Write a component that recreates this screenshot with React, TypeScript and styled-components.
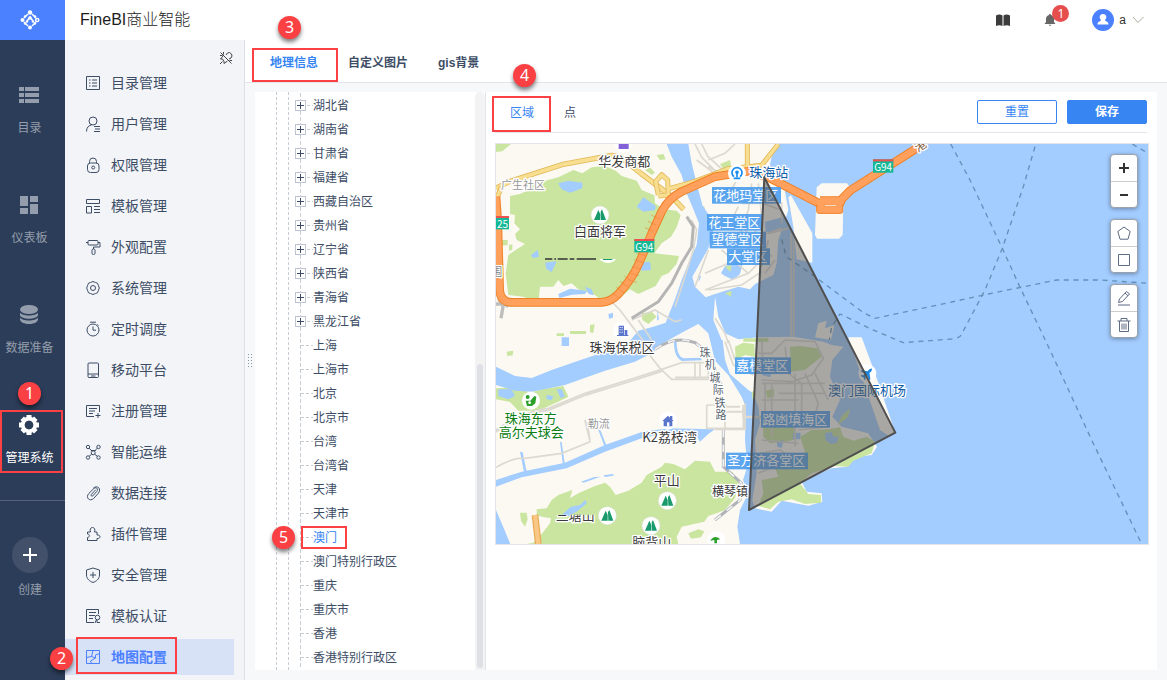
import React, { useState } from "react";
import styled, { createGlobalStyle, css } from "styled-components";

const GlobalStyle = createGlobalStyle`
  *, *::before, *::after { box-sizing: border-box; }
  body {
    margin: 0;
    background: #f7f8fa;
    color: #3d4d66;
    font-family: "Liberation Sans", "Noto Sans CJK SC", sans-serif;
    font-size: 12px;
  }
  button { font: inherit; color: inherit; background: none; border: 0; padding: 0; cursor: pointer; }
  a { color: inherit; text-decoration: none; }
  ul { list-style: none; margin: 0; padding: 0; }
  svg { display: block; }
`;

/* ---------- annotation marks ---------- */

const Frame = styled.span<{ $top: number; $right: number; $bottom: number; $left: number }>`
  position: absolute;
  top: ${(p) => p.$top}px;
  right: ${(p) => p.$right}px;
  bottom: ${(p) => p.$bottom}px;
  left: ${(p) => p.$left}px;
  border: 2px solid #fb4144;
  pointer-events: none;
  z-index: 2;
`;

const Step = styled.span<{ $top: number; $left: number }>`
  position: absolute;
  top: ${(p) => p.$top}px;
  left: ${(p) => p.$left}px;
  width: 23px;
  height: 23px;
  border-radius: 50%;
  background: #fb4044;
  color: #fff;
  font: 16px/23px "Noto Sans", sans-serif;
  text-align: center;
  box-shadow: 0 3px 4px rgba(0, 0, 0, 0.5);
  z-index: 3;
`;

/* ---------- shell ---------- */

const Shell = styled.div`
  display: flex;
  min-height: 100vh;
`;

const Nav = styled.nav`
  flex: none;
  width: 65px;
  background: #2c3d59;
`;

const Logo = styled.a`
  display: flex;
  align-items: center;
  height: 40px;
  padding-left: 20px;
  background: #4b80ff;
`;

const NavList = styled.ul`
  display: flex;
  flex-direction: column;
  gap: 47px;
  padding: 40px 2px 27px 0;
`;

const NavItem = styled.li`
  position: relative;
`;

const NavLink = styled.a<{ $active?: boolean }>`
  display: flex;
  flex-direction: column;
  align-items: center;
  height: 63px;
  padding: 4px 4px 0 0;
  gap: 11px;
  line-height: 22px;
  white-space: nowrap;
  color: ${(p) => (p.$active ? "#fff" : "#949dab")};
`;

const CreateArea = styled.div`
  display: flex;
  flex-direction: column;
  align-items: center;
  gap: 6px;
  padding: 36px 5px 0 0;
  border-top: 1px solid #56647b;
  line-height: 22px;
  color: #949dab;
`;

const CreateButton = styled.button`
  display: grid;
  place-items: center;
  width: 36px;
  height: 36px;
  border-radius: 50%;
  background: #42506a;
  color: #fff;
`;

const Body = styled.div`
  flex: 1;
  min-width: 0;
  display: flex;
  flex-direction: column;
`;

const Header = styled.header`
  display: flex;
  align-items: center;
  justify-content: space-between;
  height: 40px;
  padding: 0 22px 0 15px;
  background: #fff;
`;

const Title = styled.h1`
  margin: 0;
  font-size: 16px;
  font-weight: 300;
  line-height: 24px;
  color: #1c1c1c;
`;

const HeaderTools = styled.div`
  display: flex;
  align-items: center;
  color: #333;
`;

const BellButton = styled.button`
  position: relative;
  margin: 0 36px 0 34px;
`;

const Count = styled.span`
  position: absolute;
  top: -9px;
  left: 8px;
  width: 17px;
  height: 17px;
  border-radius: 50%;
  background: #e64e4e;
  color: #fff;
  font: 12px/17px "Noto Sans", sans-serif;
  text-align: center;
`;

const UserButton = styled.button`
  display: flex;
  align-items: center;
  gap: 5px;
`;

const Workspace = styled.div`
  flex: 1;
  display: flex;
`;

/* ---------- side menu ---------- */

const Side = styled.aside`
  position: relative;
  flex: none;
  width: 180px;
  padding-top: 25px;
  background: #f2f4f8;
  border-right: 1px solid #dcdfe5;
`;

const PinButton = styled.button`
  position: absolute;
  top: 11px;
  right: 11px;
`;

const MenuList = styled.ul`
  display: flex;
  flex-direction: column;
  gap: 5px;
  padding: 0 10px 5px 0;
`;

const MenuItem = styled.li`
  position: relative;
`;

const MenuLink = styled.a<{ $active?: boolean }>`
  display: flex;
  align-items: center;
  gap: 10px;
  height: 36px;
  padding-left: 20px;
  font-size: 14px;
  ${(p) =>
    p.$active &&
    css`
      background: #d8e2f7;
      color: #4b80ff;
      font-weight: 700;
    `}
`;

const MenuLabel = styled.span`
  padding-bottom: 2px;
`;

/* ---------- main ---------- */

const Main = styled.main`
  flex: 1;
  min-width: 0;
  display: flex;
  flex-direction: column;
`;

const TabBar = styled.div`
  display: flex;
  gap: 30px;
  height: 43px;
  padding-left: 25px;
  background: #fff;
  border-bottom: 1px solid #e3e5ea;
`;

const Tab = styled.button<{ $active?: boolean }>`
  position: relative;
  height: 43px;
  padding-bottom: 1px;
  font-weight: 700;
  color: ${(p) => (p.$active ? "#3685f2" : "#3d4d66")};
`;

const Content = styled.div`
  flex: 1;
  display: flex;
  padding: 9px 10px 10px 0;
`;

const Splitter = styled.div`
  display: grid;
  place-items: center;
  width: 10px;
  padding-bottom: 42px;
`;

const TreePane = styled.section`
  position: relative;
  flex: none;
  display: flex;
  justify-content: space-between;
  width: 231px;
  background: #fff;
  border-right: 1px solid #e3e5ea;
`;

const dashDown = css`
  background: repeating-linear-gradient(#c8ccd3 0 4px, transparent 4px 6px);
`;

const TreeList = styled.ul`
  display: flex;
  flex-direction: column;
  padding: 1px 0;
  margin-left: 21px;
  border-left: 1px dashed #c8ccd3;
`;

const TreeLevel = styled.li`
  padding-left: 11px;
  & > ul {
    margin: -1px 0;
    padding: 1px 0;
    border-left: 1px dashed #c8ccd3;
  }
`;

const TreeRow = styled.li`
  position: relative;
  display: flex;
  align-items: center;
  width: fit-content;
  height: 24px;
  padding-left: 6px;
  &::before {
    content: "";
    position: absolute;
    left: 11px;
    top: 0;
    bottom: 0;
    width: 1px;
    ${dashDown}
  }
`;

const Expander = styled.button`
  position: relative;
  display: grid;
  place-items: center;
  width: 11px;
  height: 11px;
  border: 1px solid #bfc5d0;
  background: #fff;
  color: #3d4d66;
`;

const Twig = styled.span<{ $leaf?: boolean }>`
  width: ${(p) => (p.$leaf ? 12 : 6)}px;
  margin-left: ${(p) => (p.$leaf ? 6 : 1)}px;
  height: 1px;
  background: repeating-linear-gradient(90deg, #c8ccd3 0 3px, transparent 3px 5px);
`;

const TreeLabel = styled.button<{ $active?: boolean }>`
  padding-top: 2px;
  line-height: 22px;
  color: ${(p) => (p.$active ? "#3685f2" : "#3d4d66")};
`;

const Track = styled.div`
  display: flex;
  flex-direction: column;
  justify-content: flex-end;
  width: 10px;
  padding: 2px;
  border-radius: 5px 5px 0 0;
  background: #f3f3f3;
`;

const Thumb = styled.div`
  height: 53%;
  border-radius: 3px;
  background: #dfe0e5;
`;

const Detail = styled.section`
  flex: 1;
  min-width: 0;
  padding: 0 8px 0 9px;
  background: #fff;
`;

const DetailBar = styled.div`
  display: flex;
  align-items: center;
  justify-content: space-between;
  height: 41px;
  margin: 0 2px 10px 0;
  padding-left: 15px;
  border-bottom: 1px solid #e3e5ea;
`;

const SubTabs = styled.div`
  display: flex;
  gap: 30px;
`;

const SubTab = styled.button<{ $active?: boolean }>`
  position: relative;
  height: 40px;
  padding-bottom: 2px;
  color: ${(p) => (p.$active ? "#3685f2" : "#3d4d66")};
`;

const Actions = styled.div`
  display: flex;
  gap: 10px;
`;

const ActionButton = styled.button<{ $primary?: boolean }>`
  width: 80px;
  height: 24px;
  border: 1px solid #3685f2;
  border-radius: 2px;
  line-height: 22px;
  color: #3685f2;
  ${(p) =>
    p.$primary &&
    css`
      background: #3685f2;
      color: #fff;
      font-weight: 700;
    `}
`;

const MapBox = styled.div`
  position: relative;
  height: 402px;
  border: 1px solid #e3e5ea;
  background: #a3ccff;
  overflow: hidden;
  & > svg { width: 100%; height: 400px; }
`;

const MapTools = styled.div`
  position: absolute;
  top: 10px;
  right: 10px;
  display: flex;
  flex-direction: column;
  gap: 11px;
`;

const ToolGroup = styled.div`
  width: 28px;
  border: 1px solid #9aa3ad;
  border-radius: 4px;
  background: #fff;
  box-shadow: 0 1px 4px rgba(0, 0, 0, 0.35);
`;

const ToolButton = styled.button`
  display: grid;
  place-items: center;
  width: 26px;
  height: 26px;
  color: #5d6b83;
  & + & { border-top: 1px solid #ccc; }
`;

/* ---------- icons ---------- */

const Icon = ({ size = 16, children, width = 1 }: { size?: number; width?: number; children: React.ReactNode }) => (
  <svg width={size} height={size} viewBox="0 0 16 16" fill="none" stroke="currentColor" strokeWidth={width} aria-hidden="true">
    {children}
  </svg>
);

const navItems = [
  {
    label: "目录",
    icon: (
      <g>
        <path d="M0 3h5v4H0zM6 3h14v4H6zM0 9h5v4H0zM6 9h14v4H6zM0 15h5v4H0zM6 15h14v4H6z" />
      </g>
    ),
  },
  { label: "仪表板", icon: <path d="M1 2h8v10H1zM11 2h8v6h-8zM1 14h8v6H1zM11 10h8v10h-8z" /> },
  {
    label: "数据准备",
    icon: (
      <g>
        <ellipse cx="10" cy="5.500" rx="9" ry="4.500" />
        <path d="M1 8.500c2 4 16 4 18 0v2.500c-1 5-17 5-18 0zM1 13.500c2 4 16 4 18 0v2c-1 6-17 6-18 0z" />
      </g>
    ),
  },
  {
    label: "管理系统",
    icon: (
      <g>
        <circle cx="10" cy="11" r="6.200" fill="none" stroke="currentColor" strokeWidth="4" />
        <g stroke="currentColor" strokeWidth="5">
          <path d="M10 1v4M10 17v4M0 11h4M16 11h4M3.200 4.200l3 3M13.800 14.800l3 3M3.200 17.800l3-3M13.800 7.200l3-3" />
        </g>
        <circle cx="10" cy="11" r="4.300" fill="#2c3d59" />
      </g>
    ),
  },
];

const menuItems: { label: string; icon: React.ReactNode }[] = [
  {
    label: "目录管理",
    icon: <path d="M1.500 1.500h13v13h-13zM4 5h1.500M4 8h1.500M4 11h1.500M7 5h5M7 8h5M7 11h5" />,
  },
  {
    label: "用户管理",
    icon: (
      <>
        <circle cx="8" cy="5" r="4" />
        <path d="M1.500 15.500c0-4 2-6 5-6.500M9 10.500h6M10 13h5M9 15.500h6" />
      </>
    ),
  },
  {
    label: "权限管理",
    icon: (
      <>
        <path d="M4.500 6V4.500a3.500 3.500 0 0 1 7 0V6" />
        <rect x="2.500" y="6" width="11.500" height="9.500" rx="3" />
        <circle cx="8.200" cy="10.500" r="1.500" />
      </>
    ),
  },
  {
    label: "模板管理",
    icon: <path d="M1.500 1.500h13v4h-13zM1.500 8.500h5v6.500h-5zM9 8.500h6M9 11.500h6M9 14.500h6" />,
  },
  {
    label: "外观配置",
    icon: (
      <>
        <rect x="3" y="1.500" width="10" height="4.500" rx="1" />
        <path d="M3 3.500H1M13 3.500h2v4.500H8.500v2" />
        <rect x="7" y="10" width="3" height="5.500" rx="1.200" />
      </>
    ),
  },
  {
    label: "系统管理",
    icon: (
      <>
        <path d="M5.500 2.500Q8 .5 10.500 2.500q2.500 0 2.800 2.700 2 2.800 0 5.600-.3 2.700-2.800 2.700-2.500 2-5 0-2.500 0-2.800-2.700-2-2.800 0-5.600.3-2.700 2.800-2.700z" strokeLinejoin="round" />
        <circle cx="8" cy="8" r="2.500" />
      </>
    ),
  },
  {
    label: "定时调度",
    icon: (
      <>
        <circle cx="8" cy="9" r="6" />
        <path d="M5 1.200h6M8 5.500V9.200h3M12.300 3.500l1.200 1" />
      </>
    ),
  },
  {
    label: "移动平台",
    icon: (
      <>
        <rect x="3" y="1" width="10.500" height="14.500" rx="1" />
        <path d="M3 12h10.500M6 14h4.500" />
      </>
    ),
  },
  {
    label: "注册管理",
    icon: <path d="M14.500 9V2.500h-13v11H9M4 5.500h8M4 8h6M4 10.500h4M10.500 12.500h5M13 10v5" />,
  },
  {
    label: "智能运维",
    icon: (
      <>
        <circle cx="3" cy="3" r="1.700" />
        <circle cx="13.500" cy="3" r="1.700" />
        <circle cx="3" cy="13.500" r="1.700" />
        <circle cx="13.500" cy="13.500" r="1.700" />
        <circle cx="8.200" cy="8.800" r="2" />
        <path d="M4.200 4.200 7 7.200M12.200 4.200 9.500 7.200M4.200 12.200l2.500-2M12.200 12.200l-2.500-2M6 6.500h4.500" />
      </>
    ),
  },
  {
    label: "数据连接",
    icon: (
      <path d="M10.500 5 6.300 9.500c-.8 1 .5 2.300 1.500 1.400l4-4.500c2.200-2.600-1-4.800-3-2.800L3.800 8.500c-3.800 4.300 1.200 8.500 4.800 5l4.500-5C17 4 12.500-.5 8.500 3" strokeLinecap="round" />
    ),
  },
  {
    label: "插件管理",
    icon: (
      <path d="M2.500 14.500v-3c2.500 0 2.500-3.500 0-3.500V6h3c-1-2.500 0-4.500 2-4.500s3 2 2 4.500h2.500v3c4-.5 4 4 0 3.500v2z" strokeLinejoin="round" />
    ),
  },
  {
    label: "安全管理",
    icon: <path d="M8 1 14.500 3v5c0 4-3.500 6.500-6.500 7.500C5 14.500 1.500 12 1.500 8V3zM8 5v6M5 8h6" strokeLinejoin="round" />,
  },
  {
    label: "模板认证",
    icon: (
      <>
        <path d="M13.500 6V1.500h-12v13H9M4 4.500h7M4 7.500h6M4 10.500h4" />
        <circle cx="12.500" cy="9.500" r="2.300" />
        <path d="M11.500 11.500 10 15M12 12v2.500h3" />
      </>
    ),
  },
  {
    label: "地图配置",
    icon: <path d="M1.500 1.500h13v13h-13zM1.500 8.500l5-1 4 1.500V6l4-1.500M6.500 7.500l1.500-6M10.500 9l-5 3 1 2.500" />,
  },
];

/* ---------- map ---------- */

const Halo = styled.text`
  font-family: "Noto Sans CJK SC", sans-serif;
  text-anchor: middle;
  dominant-baseline: central;
  paint-order: stroke;
  stroke: #fff;
  stroke-width: 8px;
  stroke-linejoin: round;
`;

const Plain = styled(Halo)`
  stroke: none;
`;

const places: { x: number; y: number; text: string; color?: string; size?: number }[] = [
  { x: 388, y: 60, text: "华发商都" },
  { x: 84, y: 131, text: "广生社区", color: "#999", size: 33 },
  { x: 315, y: 271, text: "白面将军" },
  { x: 5, y: 392, text: "围", color: "#888", size: 33 },
  { x: 381, y: 620, text: "珠海保税区" },
  { x: 311, y: 849, text: "勒流", color: "#999", size: 33 },
  { x: 524, y: 890, text: "K2荔枝湾" },
  { x: 107, y: 831, text: "珠海东方", color: "#0b7d12" },
  { x: 109, y: 875, text: "高尔夫球会", color: "#0b7d12" },
  { x: 515, y: 1018, text: "平山" },
  { x: 470, y: 1203, text: "脑背山" },
  { x: 705, y: 1050, text: "横琴镇", size: 36 },
  { x: 630, y: 636, text: "珠", color: "#5d6670", size: 33 },
  { x: 646, y: 673, text: "机", color: "#5d6670", size: 33 },
  { x: 660, y: 710, text: "城", color: "#5d6670", size: 33 },
  { x: 670, y: 748, text: "际", color: "#5d6670", size: 33 },
  { x: 675, y: 785, text: "铁", color: "#5d6670", size: 33 },
  { x: 678, y: 823, text: "路", color: "#5d6670", size: 33 },
];

const districts: [number, number, number, string][] = [
  [651, 141, 207, "花地玛堂区"],
  [636, 222, 167, "花王堂区"],
  [644, 275, 169, "望德堂区"],
  [696, 325, 129, "大堂区"],
  [720, 652, 168, "嘉模堂区"],
  [798, 813, 207, "路凼填海区"],
  [693, 938, 246, "圣方济各堂区"],
];

const Peak = ({ x, y }: { x: number; y: number }) => (
  <g transform={`translate(${x} ${y})`}>
    <circle r="27" fill="#fff" stroke="#ddd" strokeWidth="1.500" />
    <path d="M-18 15 -5-15 1 -2 1 15zM3 15 2-10 6-17 18 15z" fill="#189a6c" />
  </g>
);

const Shield = ({ x, y, w, text }: { x: number; y: number; w: number; text: string }) => (
  <g>
    <rect x={x} y={y} width={w} height="40" fill="#14b896" />
    <rect x={x} y={y} width={w} height="6" fill="#f05050" />
    <Plain x={x + w / 2} y={y + 22} fontSize="30" fill="#fff">
      {text}
    </Plain>
  </g>
);

const Cased = ({ d, outer, inner, width, edge = 5 }: { d: string; outer: string; inner: string; width: number; edge?: number }) => (
  <g fill="none" strokeLinejoin="round">
    <path d={d} stroke={outer} strokeWidth={width} />
    <path d={d} stroke={inner} strokeWidth={width - edge} />
  </g>
);

/* Map units are thirds of a screen pixel. */
const MacauMap = () => (
  <svg viewBox="3 12 1956 1200" preserveAspectRatio="xMinYMin slice" role="img" aria-label="澳门地图">
    <rect x="3" y="12" width="1956" height="1200" fill="#fcf9f2" />

    {/* parks on the mainland */}
    <g fill="#c9e5a0">
      <path d="M3 12H48L22 34 3 36zM45 168 75 162 100 150 120 125 150 122 190 112 235 90 262 100 290 82 330 78 362 92 380 108 425 122 440 150 478 166 480 190 505 208 545 212 557 226 545 262 528 290 500 310 478 340 552 348 545 372 520 400 500 408 482 438 430 462 405 448 375 474 330 492 300 465 250 448 230 430 205 438 190 420 175 440 135 440 130 490 85 470 40 465 32 400 40 345 62 330 90 312 65 300 60 282 75 268 58 250 60 225 45 222z" />
      <path d="M450 90 465 82 480 98 470 105zM485 45 505 42 512 58 495 60zM615 205 628 198 630 222 615 232zM440 520 470 515 485 530 460 552 442 540zM225 573h48v9h-48zM285 555l14-2-4 26-10-2zM42 315l10-2v16l-10 3zM185 580h22v8h-22zM20 300h18v16H20zM675 72l30-12 4 20-24 8z" />
      <path d="M3 745 85 742 100 760 140 748 205 738 220 770 190 785 130 812 70 812 45 786 3 778zM35 635l20-3-2 14-16 2z" />
      <path d="M125 1108 155 1105 170 1080 190 1065 232 1050 225 1075 250 1060 300 1038 330 1028 345 1040 362 1065 400 1052 440 1028 455 1005 500 980 510 968 535 972 570 988 600 962 645 965 660 995 712 995 732 1030 720 1075 690 1110 665 1120 640 1128 628 1145 560 1160 545 1190 550 1212H95L115 1208 142 1180 165 1150 168 1135 140 1130 125 1125z" />
      <path d="M75 1118h20l3 20-8 22-12-18zM580 1180l30-12 18 6-10 18-30 4z" />
    </g>

    {/* water */}
    <g fill="#a3ccff">
      <path d="M515 12 530 50 560 105 575 160 592 200 612 250 605 315 580 370 560 420 540 478 512 548 470 562 430 572 405 602 330 635 250 662 170 690 110 714 60 708 3 680V735L60 752 110 755 210 735 330 692 420 665 470 640 500 612 560 578 610 552 640 580 660 662 700 705 740 770 752 800 750 900 757 980 744 1020 760 1060 735 1110 727 1160 735 1212H1962V12H845L830 50 818 105 868 145 880 210 850 300 845 370 835 405 780 432 765 448 730 440 660 462 632 472 600 440 592 410 612 375 640 325 655 270 645 230 622 195 605 130 590 70 580 12z" />
      <path d="M190 130 220 122 262 128 262 145 225 158 200 148zM425 200 445 172 482 198 480 210 445 215zM435 368 465 365 468 390 440 392zM150 368l35-4-15 32-15-8zM108 345l20-15 4 20-18 4zM190 462l35-16 50 6-4 10-40 2-38 10zM340 522l14-4v15l-12 3zM270 440l20 8 6 18-15-4zM488 512l-2 30 6-4zM610 405l8 4-6 16zM200 592h22v26h-22zM625 250l5 45-10 14z" />
      <path d="M3 1110 20 1150 46 1212H3zM3 1020 80 995 210 968 330 915 440 876 520 865 660 868 640 882 615 905 600 880 500 882 440 895 330 935 215 985 80 1012 3 1040zM75 935l8 2 12 58-8 1zM195 905l5 1 10 70-6 1zM310 870l5-2 22 55-6 3zM258 1025l40-14 18-1-50 18zM325 1006l30-4v5l-25 4zM200 1125 228 1100 255 1095 272 1080 275 1090 245 1115 220 1128z" />
      <path d="M545 605q0 45 22 50l50-2 4 8-60 2q-24-10-24-56zM10 748l40 0 10 20-20 10-30-10zM185 748h16l8 22-12 4zM155 765l20 4-6 12-14-4z" />
      <path d="M690 378 745 362 735 402 715 420 690 408 678 400zM810 245 868 230 880 265 830 280 812 275zM685 145 720 140 715 168 690 160z" />
    </g>

    {/* islands */}
    <g fill="#fcf9f2">
      <path d="M680 575 730 598 790 592 895 590 985 605 1010 615 1045 620 1012 660 1005 710 1035 780 1012 830 1040 860 1120 880 1146 920 1130 945 1080 952 1055 980 1010 985 950 1010 920 1025 935 1055 980 1060 982 1085 940 1097 860 1082 830 1115 780 1105 772 1080 785 1000 780 900 795 850 790 800 775 760 760 750 705 702 690 660z" />
      <path d="M1060 592H1100L1140 700 1201 878 1182 888 1155 870 1090 680z" />
      <path d="M965 142 980 130H1056L1070 148 1045 190 1043 285 1032 296H966L960 285zM880 172 888 166 952 280V368L905 358 895 260zM660 470 670 530 700 600 680 600 655 540z" />
      <path d="M960 592 970 550 995 542 990 565 1018 556 1008 600z" />
    </g>
    <g fill="#c9e5a0">
      <path d="M720 620 745 608 778 612 780 650 750 645 722 660zM745 595h75v10h-75zM885 620 915 618 968 625 980 650 930 690 888 695zM770 755l10-3v24l-8 2zM690 460l20-8-2 18zM1040 828l26-24-8 28-30 24zM812 752l25-6v24l-20 4zM742 675l25-5-5 25-20-4zM805 862 900 858 895 900 870 905 825 910 805 890z" />
      <path d="M915 890 950 870 1000 868 1035 862 1045 890 1075 902 1115 890 1140 905 1130 940 1075 962 1060 980 1020 978 950 1000 915 1030 940 1062 978 1065 978 1088 930 1092 890 1078 850 1085 825 1108 790 1098 805 1060 800 1020 850 1010 840 985 900 960 930 935zM690 380l20-4-4 20z" />
    </g>
    <g fill="#a3ccff">
      <path d="M990 880l20-4 6 16 14-4-4 20-18 4-16-12zM895 878h22l-2 20h-22zM845 905l20-6-4 24-14-2zM1065 670l-48 40 10 60 30-10zM800 690l30 4-4 18-24-6z" />
    </g>

    {/* minor roads */}
    <g fill="none" stroke="#dcd9d1" strokeWidth="5">
      <path d="M3 982Q60 950 90 955L200 940 285 905 270 840M285 905l-8-60M3 870Q80 815 160 805L270 760 400 720 500 688 560 668 640 668M3 876Q80 821 160 811L270 766 400 726 500 694M460 640 495 685 530 718 640 718M540 712h100M600 668v50M615 665v50M640 670v50M635 795h60M635 795v70h110v-70M690 790v80" />
      <path d="M345 480 375 510 450 610M410 540 480 510 540 545 560 540M430 540l40 60M590 240l15 30-10 60-35 110-20 60M600 12l20 40 40 40M620 12l20 40M605 60l60 45M640 50l45 42M640 80l30 16" />
      <path d="M720 12 690 40 640 60M740 100 720 130 690 180M730 200l-30 60M740 190h60l60 20M770 130l-10 80-60 160-70 30M790 130l10 100-50 120M700 240l120 100-60 60-130 50M640 450l100-15 60-40M600 440l40-110M740 260l90 90M820 280l60-15M760 300l100-35M810 130l50 60v60M680 330l80 70M820 300l-20 80M840 360l-30 40" />
      <path d="M690 605l25 70 60 30M700 600l20 60M790 640h40l40-40 90 5 25 50-35 50-60 20-90-5M800 730h190M810 730v120M830 730v160M900 700v150M920 730v110M850 760h140M800 780h110M960 700l40 80M930 700l40 90-20 70M790 830h120M800 860h100v60M800 900l110 10M795 940l60-10 40 30M820 970l60-20M790 1000l70-30M870 620l10 80 40 30M800 600l5 100M1000 860l-90 10" />
      <path d="M888 280v310M896 280v310M660 535 690 580 700 610" />
    </g>
    <path d="M745 795v35h60M745 832h55M660 868h90V790M675 800h60M680 815h70" fill="none" stroke="#dcd9d1" strokeWidth="6" />

    {/* railways */}
    <g fill="none">
      <path d="M575 230 595 260 590 320 560 370 530 430 490 485 410 535" stroke="#b5b5b5" strokeWidth="9" />
      <path d="M480 628Q540 585 600 608L640 640 680 740M685 870V980L740 1030 735 1080 660 1140" stroke="#b0b4b8" strokeWidth="9" />
      <path d="M480 628Q540 585 600 608L640 640 680 740M685 870V980L740 1030 735 1080 660 1140" stroke="#f2f2f2" strokeWidth="5" strokeDasharray="22 22" />
    </g>
    <path d="M10 470 24 500 18 535M3 492h75M10 478l30 22" fill="none" stroke="#bdbdbd" strokeWidth="10" />

    {/* main roads */}
    <Cased d="M3 145 40 126 200 74 350 46 378 52 440 102 528 168 566 208" outer="#e2b858" inner="#f7de90" width={16} />
    <Cased d="M3 180 20 140M490 165 482 125 500 104 518 120 520 165 490 168M515 148 600 124 700 86 800 76 850 12M757 12V80" outer="#e2b858" inner="#f7de90" width={15} />
    <path d="M120 1125 130 1212" stroke="#e8a854" strokeWidth="20" />
    <path d="M120 1125 130 1212" stroke="#fac884" strokeWidth="13" />
    <Cased
      d="M3 170 8 240 14 450Q16 487 50 487H320Q350 484 370 462 410 420 432 370L470 280 500 215Q520 175 560 155L660 110 760 94 820 112 980 194M1030 200 1040 178 1065 152 1150 98 1285 12M975 182H1035"
      outer="#f08024"
      inner="#ffa05c"
      width={26}
      edge={6}
    />
    <path d="M967 188h76v26q0 6-6 6h-66q-6 0-6-6z" fill="#ffa05c" />
    <path d="M965 194v20q0 6 6 6h66q6 0 6-6v-20" fill="none" stroke="#f08024" strokeWidth="3" />
    <path d="M988 194h38v5h-38z" fill="#fcf9f2" stroke="#f08024" strokeWidth="2" />
    <path d="M362 468 400 415M412 425 450 300M462 270l24-50" stroke="#e58638" strokeWidth="28" strokeDasharray="3 18" opacity="0.500" fill="none" />

    {/* ferry routes */}
    <g fill="none" stroke="#6391b8" strokeWidth="4" strokeDasharray="15 14">
      <path d="M1367 12 1425 120 1522 325 1575 442 1665 630 1790 900 1940 1212M1620 20 1585 140 1522 325 1470 450 1400 582Q1396 594 1370 597L1225 608 1130 568 1035 522 1010 560 1003 600" />
      <path d="M860 298 874 350 960 410 1105 518 1140 535 1305 500 1480 462 1685 420H1815L1959 430M1912 12 1959 40" />
    </g>

    {/* point markers */}
    <circle cx="385" cy="12" r="26" fill="#fff" />
    <path d="M371 12h30v15h-30z" fill="#8260d8" />
    <Peak x={315} y={225} />
    <Peak x={337} y={1127} />
    <Peak x={517} y={1082} />
    <Peak x={468} y={1157} />
    <path d="M150 357h22M178 357h5M188 357h30M224 357h14M245 357h58" stroke="#333" strokeWidth="4" />
    <path d="M312 357h52q-24 24-52 0" fill="#fff" />
    <path d="M324 357h28v3h-28z" fill="#189a6c" />
    <g fill="#5b74cc">
      <circle cx="381" cy="572" r="27" fill="#fff" />
      <path d="M371 557h16v28h-16zM389 570h8v15h-8zM366 585h34v3h-34z" />
      <path d="M374 561h3v3h-3zM380 561h3v3h-3zM374 568h3v3h-3zM380 568h3v3h-3zM374 575h3v3h-3zM380 575h3v3h-3z" fill="#fff" />
      <circle cx="519" cy="842" r="27" fill="#fff" />
      <path d="M502 843l17-16 6 6v-5h7v11l4 4h-4v16h-26v-16z" />
      <path d="M516 847h7v12h-7z" fill="#fff" />
    </g>
    <g>
      <circle cx="108" cy="782" r="27" fill="#fff" />
      <circle cx="98" cy="771" r="6" fill="#2ca02c" />
      <path d="M92 782h14l12-14 6 2-3 20-10 8H96z" fill="#2ca02c" />
      <circle cx="104" cy="788" r="4" fill="#fff" />
      <circle cx="664" cy="1200" r="27" fill="#fff" />
      <path d="M646 1202q12-20 30-4l-10 2v10h-8v-10z" fill="#2ca02c" />
    </g>
    <g fill="none" stroke="#1a8cf0" strokeWidth="5">
      <circle cx="726" cy="100" r="27" fill="#fff" stroke="none" />
      <path d="M717 110a15 15 0 1 1 18 0M726 98v14M716 115h20" />
      <circle cx="726" cy="97" r="3" />
    </g>
    <g transform="translate(1117 700) rotate(45)">
      <circle r="27" fill="#fff" />
      <path d="M0-20 4-14V-5L19 6V10L4 5V12L9 17V20L0 17-9 20V17L-4 12V5L-19 10V6L-4-5V-14z" fill="#1c86e0" />
    </g>
    <Shield x={418} y={297} w={60} text="G94" />
    <Shield x={1134} y={58} w={61} text="G94" />
    <Shield x={3} y={228} w={39} text="25" />

    {places.map((p) => (
      <Halo key={p.text} x={p.x} y={p.y} fontSize={p.size ?? 39} fill={p.color ?? "#3a3a3a"}>
        {p.text}
      </Halo>
    ))}
    <clipPath id="cut">
      <path d="M150 1124h200v60H150z" />
    </clipPath>
    <g clipPath="url(#cut)">
      <Halo x="241" y="1124" fontSize="39" fill="#3a3a3a">
        三塘山
      </Halo>
    </g>
    <Halo x="1274" y="14" fontSize="36" fill="#7a5230" transform="rotate(-35 1274 14)">
      港
    </Halo>
    <Halo x="821" y="93" fontSize="39" fill="#0f5ca8">
      珠海站
    </Halo>
    <Halo x="1116" y="748" fontSize="39" fill="#0f5ca8">
      澳门国际机场
    </Halo>
    {districts.map(([x, y, w, text]) => (
      <g key={text}>
        <rect x={x} y={y} width={w} height="50" fill="#4a9bee" opacity="0.900" />
        <Plain x={x + w / 2 - 2} y={y + 21} fontSize="39" fill="#fff">
          {text}
        </Plain>
      </g>
    ))}

    {/* selected region */}
    <path d="M808 112 1201 878 762 1110z" fill="#555" fillOpacity="0.500" stroke="#4f4f4f" strokeWidth="6" strokeLinejoin="round" />
  </svg>
);

/* ---------- page ---------- */

const branches = ["湖北省", "湖南省", "甘肃省", "福建省", "西藏自治区", "贵州省", "辽宁省", "陕西省", "青海省", "黑龙江省"];
const leaves = ["上海", "上海市", "北京", "北京市", "台湾", "台湾省", "天津", "天津市", "澳门", "澳门特别行政区", "重庆", "重庆市", "香港", "香港特别行政区"];

export default function App() {
  const [region, setRegion] = useState("澳门");

  return (
    <>
      <GlobalStyle />
      <Shell>
        <Nav>
          <Logo href="#" aria-label="首页">
            <svg width="20" height="20" viewBox="0 0 20 20" fill="none" stroke="#fff" strokeWidth="1.500" aria-hidden="true">
              <path d="M4 8 8 4M12 4l4 4M16 12l-4 4M8 16l-4-4M7 11l3-4 3 4" />
              <g fill="#fff" stroke="none">
                <circle cx="10" cy="2.500" r="2.200" />
                <circle cx="10" cy="17.500" r="2" />
                <circle cx="2.500" cy="10" r="2" />
                <circle cx="10" cy="8" r="1.800" />
                <circle cx="7" cy="11.500" r="1.300" />
                <circle cx="13" cy="11.500" r="1.300" />
                <circle cx="5" cy="6.500" r="1.200" />
                <circle cx="15" cy="6.500" r="1.200" />
                <circle cx="5" cy="13.500" r="1.200" />
                <circle cx="15" cy="13.500" r="1.200" />
              </g>
              <circle cx="17.200" cy="10" r="1.600" />
            </svg>
          </Logo>
          <NavList>
            {navItems.map((item) => {
              const active = item.label === "管理系统";
              return (
                <NavItem key={item.label}>
                  <NavLink href="#" $active={active}>
                    <svg width="21" height="22" viewBox="0 0 21 22" fill="currentColor" aria-hidden="true">
                      {item.icon}
                    </svg>
                    {item.label}
                  </NavLink>
                  {active && (
                    <>
                      <Frame $top={0} $right={0} $bottom={0} $left={0} />
                      <Step $top={-28} $left={18}>1</Step>
                    </>
                  )}
                </NavItem>
              );
            })}
          </NavList>
          <CreateArea>
            <CreateButton aria-label="创建">
              <Icon width={2}>
                <path d="M8 1v14M1 8h14" />
              </Icon>
            </CreateButton>
            创建
          </CreateArea>
        </Nav>

        <Body>
          <Header>
            <Title>FineBI商业智能</Title>
            <HeaderTools>
              <button aria-label="帮助">
                <svg width="14" height="13" viewBox="0 0 14 13" fill="#3c3c3c" aria-hidden="true">
                  <path d="M0 1.500Q3.500-.5 6.500 1.500V12Q3.500 10.500 0 12zM14 1.500Q10.500-.5 7.500 1.500V12q3-1.500 6.500 0z" />
                </svg>
              </button>
              <BellButton aria-label="消息">
                <svg width="12" height="12" viewBox="0 0 12 12" fill="#666" aria-hidden="true">
                  <path d="M5.200 0h1.600v1C9 1.500 10 3 10 5v3l1.500 2H.5L2 8V5c0-2 1-3.500 3.200-4zM4.500 10.800h3L6 12z" />
                </svg>
                <Count>1</Count>
              </BellButton>
              <UserButton>
                <svg width="22" height="22" viewBox="0 0 22 22" aria-hidden="true">
                  <circle cx="11" cy="11" r="11" fill="#4b80ff" />
                  <path d="M11 5a3.300 3.300 0 0 1 2 6c0 1.500 3.500 1 3.500 4.500h-11C5.500 12 9 12.500 9 11a3.300 3.300 0 0 1 2-6z" fill="#fff" />
                </svg>
                <span>a</span>
                <svg width="14" height="8" viewBox="0 0 14 8" fill="none" stroke="#aeac9c" aria-hidden="true">
                  <path d="M2 1l5 5.500L12.500 1" />
                </svg>
              </UserButton>
            </HeaderTools>
          </Header>

          <Workspace>
            <Side>
              <PinButton aria-label="取消固定">
                <svg width="14" height="14" viewBox="0 0 14 14" fill="none" stroke="#444" aria-hidden="true">
                  <path d="M1.500 1.500 12.500 12.500M7 4 8.500 2l2-.5 2 1.500.5 2-1 2L10 8M4 5 1.500 8h2l1.500 2.500v2L8.500 10M3.500 10.500 1 13M4.500 1v2.500M1 4.500h2.500M10.500 9.500H13" />
                </svg>
              </PinButton>
              <MenuList>
                {menuItems.map((item) => {
                  const active = item.label === "地图配置";
                  return (
                    <MenuItem key={item.label}>
                      <MenuLink href="#" $active={active}>
                        <Icon>{item.icon}</Icon>
                        <MenuLabel>{item.label}</MenuLabel>
                      </MenuLink>
                      {active && (
                        <>
                          <Frame $top={-2} $right={57} $bottom={1} $left={11} />
                          <Step $top={8} $left={-15}>2</Step>
                        </>
                      )}
                    </MenuItem>
                  );
                })}
              </MenuList>
            </Side>

            <Main>
              <TabBar>
                <Tab $active>
                  地理信息
                  <Frame $top={8} $right={-20} $bottom={1} $left={-18} />
                  <Step $top={-24} $left={8}>3</Step>
                </Tab>
                <Tab>自定义图片</Tab>
                <Tab>gis背景</Tab>
              </TabBar>

              <Content>
                <Splitter>
                  <svg width="5" height="13" viewBox="0 0 5 13" fill="#8a93a3" aria-hidden="true">
                    {[0, 3, 6, 9, 12].map((y) => (
                      <path key={y} d={`M0 ${y}h1v1H0zM3 ${y}h1v1H3z`} />
                    ))}
                  </svg>
                </Splitter>
                <TreePane>
                  <TreeList>
                    <TreeLevel>
                      <ul>
                        {branches.map((name) => (
                          <TreeRow key={name}>
                            <Expander aria-label={`展开${name}`}>
                              <svg width="9" height="9" viewBox="0 0 9 9" fill="currentColor" aria-hidden="true">
                                <path d="M4 1h1v7H4zM1 4h7v1H1z" />
                              </svg>
                            </Expander>
                            <Twig />
                            <TreeLabel>{name}</TreeLabel>
                          </TreeRow>
                        ))}
                        {leaves.map((name) => (
                          <TreeRow key={name}>
                            <Twig $leaf />
                            <TreeLabel $active={name === region} onClick={() => setRegion(name)}>
                              {name}
                            </TreeLabel>
                            {name === "澳门" && (
                              <>
                                <Frame $top={1} $right={-10} $bottom={0} $left={12} />
                                <Step $top={1} $left={-17}>5</Step>
                              </>
                            )}
                          </TreeRow>
                        ))}
                      </ul>
                    </TreeLevel>
                  </TreeList>
                  <Track>
                    <Thumb />
                  </Track>
                </TreePane>

                <Detail>
                  <DetailBar>
                    <SubTabs>
                      <SubTab $active>
                        区域
                        <Frame $top={4} $right={-17} $bottom={0} $left={-18} />
                        <Step $top={-28} $left={3}>4</Step>
                      </SubTab>
                      <SubTab>点</SubTab>
                    </SubTabs>
                    <Actions>
                      <ActionButton>重置</ActionButton>
                      <ActionButton $primary>保存</ActionButton>
                    </Actions>
                  </DetailBar>
                  <MapBox>
                    <MacauMap />
                    <MapTools>
                      <ToolGroup>
                        <ToolButton aria-label="放大">
                          <svg width="10" height="10" viewBox="0 0 10 10" fill="#333" aria-hidden="true">
                            <path d="M4 0h2v10H4zM0 4h10v2H0z" />
                          </svg>
                        </ToolButton>
                        <ToolButton aria-label="缩小">
                          <svg width="8" height="2" viewBox="0 0 8 2" fill="#333" aria-hidden="true">
                            <path d="M0 0h8v2H0z" />
                          </svg>
                        </ToolButton>
                      </ToolGroup>
                      <ToolGroup>
                        <ToolButton aria-label="绘制多边形">
                          <Icon>
                            <path d="M8 2 14.200 6.500 12 14.200H4L1.800 6.500z" strokeLinejoin="round" />
                          </Icon>
                        </ToolButton>
                        <ToolButton aria-label="绘制矩形">
                          <Icon>
                            <path d="M2.500 2.500h11v11h-11z" />
                          </Icon>
                        </ToolButton>
                      </ToolGroup>
                      <ToolGroup>
                        <ToolButton aria-label="编辑">
                          <Icon>
                            <path d="M2.500 12.500 3.500 9 10.500 1.500 13.500 4 6.500 11.500zM9 3l3 2.800M2 15h12" strokeLinejoin="round" />
                          </Icon>
                        </ToolButton>
                        <ToolButton aria-label="删除">
                          <Icon>
                            <path d="M1.500 4h13M5 4V1.500h6V4M3.500 4v10.500h9V4M6 6.500v6M8 6.500v6M10 6.500v6" />
                          </Icon>
                        </ToolButton>
                      </ToolGroup>
                    </MapTools>
                  </MapBox>
                </Detail>
              </Content>
            </Main>
          </Workspace>
        </Body>
      </Shell>
    </>
  );
}
